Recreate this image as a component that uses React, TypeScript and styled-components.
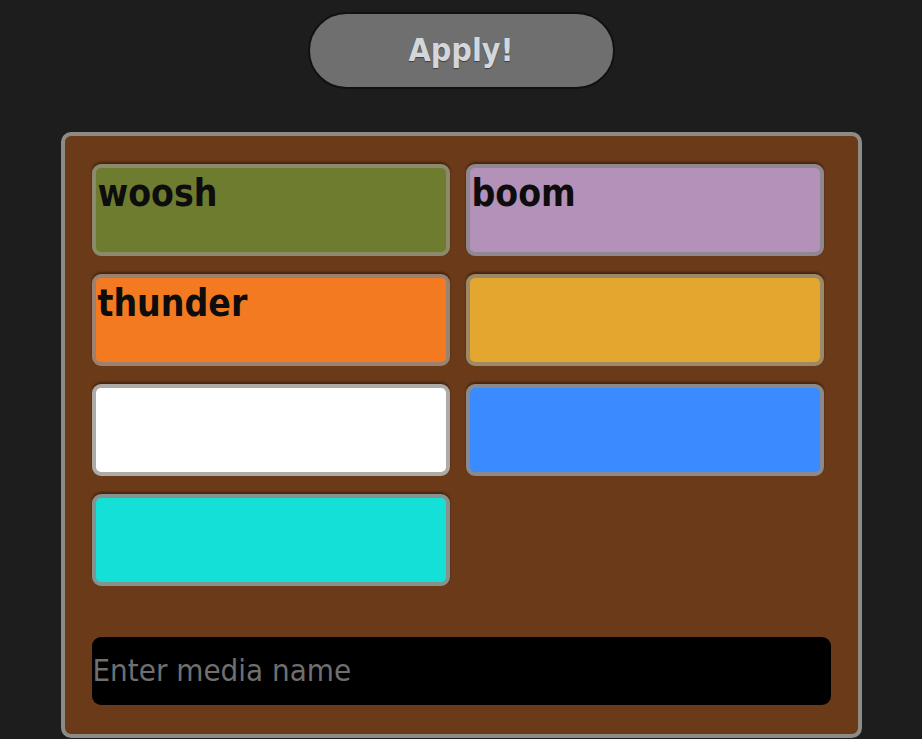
import React from "react";
import styled, { createGlobalStyle } from "styled-components";

const GlobalStyle = createGlobalStyle`
  html, body {
    margin: 0;
    padding: 0;
    background: #1d1d1d;
    height: 100%;
    overflow: hidden;
  }
  body {
    font-family: "DejaVu Sans Condensed", "DejaVu Sans", sans-serif;
  }
`;

const Page = styled.div`
  display: flex;
  flex-direction: column;
  align-items: center;
  padding-top: 12px;
  gap: 43px;
  min-height: 739px;
  box-sizing: border-box;
`;

const ApplyButton = styled.button`
  width: 307px;
  height: 77px;
  border-radius: 39px;
  background: #6f6f6f;
  border: 2px solid #111111;
  box-sizing: border-box;
  display: flex;
  align-items: center;
  justify-content: center;
  font-family: "DejaVu Sans Condensed", "DejaVu Sans", sans-serif;
  font-stretch: condensed;
  font-weight: bold;
  font-size: 32px;
  color: #d3d7dc;
  text-shadow: 0 1px 1px rgba(0, 0, 0, 0.45);
  padding: 0 0 1px 0;
  cursor: pointer;
`;

const Panel = styled.div`
  width: 801px;
  box-sizing: border-box;
  border: 4px solid #8e8a85;
  border-radius: 10px;
  background: #6a3a19;
  padding: 28px 27px 29px 27px;
  display: flex;
  flex-direction: column;
  gap: 51px;
`;

const Grid = styled.div`
  display: grid;
  grid-template-columns: repeat(2, 358px);
  column-gap: 16px;
  row-gap: 18px;
`;

const Tile = styled.div<{ $color: string; $edge: string }>`
  height: 92px;
  box-sizing: border-box;
  border: 4px solid ${(p) => p.$edge};
  border-radius: 9px;
  background: ${(p) => p.$color};
  box-shadow: 0 -2px 2px rgba(40, 20, 5, 0.55);
  padding: 4px 0 0 2px;
  font-family: "DejaVu Sans Condensed", "DejaVu Sans", sans-serif;
  font-stretch: condensed;
  font-weight: bold;
  font-size: 37px;
  color: #0d0d0d;
  line-height: normal;
  overflow: hidden;
  white-space: nowrap;
`;

const MediaInput = styled.input`
  width: 100%;
  height: 68px;
  box-sizing: border-box;
  background: #000000;
  border: none;
  border-radius: 9px;
  padding: 0 0 2px 1px;
  font-family: "DejaVu Sans Condensed", "DejaVu Sans", sans-serif;
  font-stretch: condensed;
  font-size: 31px;
  color: #cccccc;
  outline: none;
  &::placeholder {
    color: #6f6f6f;
  }
`;

const tiles = [
  { label: "woosh", color: "#6e7c30", edge: "#8b8a6c" },
  { label: "boom", color: "#b391b8", edge: "#8f8890" },
  { label: "thunder", color: "#f47a22", edge: "#9a8270" },
  { label: "", color: "#e3a62e", edge: "#9a8a68" },
  { label: "", color: "#ffffff", edge: "#aeaaa6" },
  { label: "", color: "#3a8bff", edge: "#8a8a8e" },
  { label: "", color: "#14e0d8", edge: "#86928e" },
];

export default function App() {
  return (
    <>
      <GlobalStyle />
      <Page>
        <ApplyButton>Apply!</ApplyButton>
        <Panel>
          <Grid>
            {tiles.map((t, i) => (
              <Tile key={i} $color={t.color} $edge={t.edge}>
                {t.label}
              </Tile>
            ))}
          </Grid>
          <MediaInput placeholder="Enter media name" />
        </Panel>
      </Page>
    </>
  );
}
